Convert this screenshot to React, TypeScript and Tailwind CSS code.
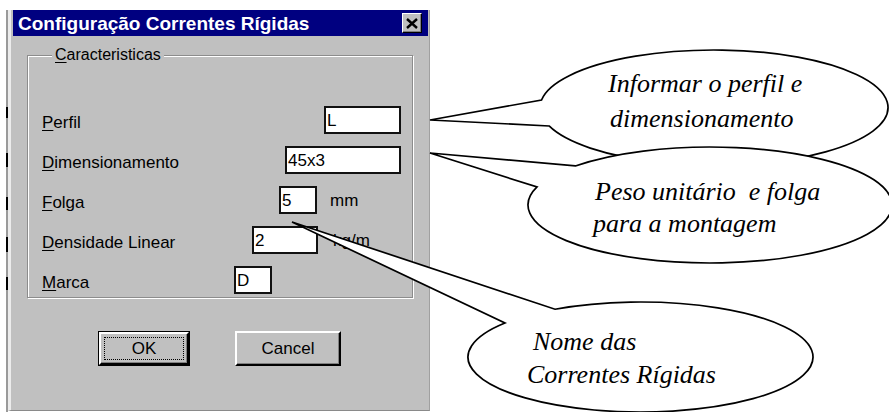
import React from "react";

type Row = {
  first: string;
  rest: string;
  labelW: string;
  inputW: string;
  value: string;
  unit?: string;
  unitCls?: string;
};

const rows: Row[] = [
  { first: "P", rest: "erfil", labelW: "w-[282px]", inputW: "w-[77px]", value: "L" },
  { first: "D", rest: "imensionamento", labelW: "w-[243px]", inputW: "w-[116px]", value: "45x3" },
  { first: "F", rest: "olga", labelW: "w-[237px]", inputW: "w-[38px]", value: "5", unit: "mm", unitCls: "ml-[13px]" },
  { first: "D", rest: "ensidade Linear", labelW: "w-[210px]", inputW: "w-[66px]", value: "2", unit: "kg/m", unitCls: "ml-[15px]" },
  { first: "M", rest: "arca", labelW: "w-[192px]", inputW: "w-[38px]", value: "D" },
];

function calloutPath(
  tip: [number, number],
  cx: number,
  cy: number,
  rx: number,
  ry: number,
  a1: number,
  a2: number
) {
  const r = Math.PI / 180;
  const p1 = [cx + rx * Math.cos(a1 * r), cy + ry * Math.sin(a1 * r)];
  const p2 = [cx + rx * Math.cos(a2 * r), cy + ry * Math.sin(a2 * r)];
  return `M ${tip[0]} ${tip[1]} L ${p1[0].toFixed(2)} ${p1[1].toFixed(2)} A ${rx} ${ry} 0 1 1 ${p2[0].toFixed(2)} ${p2[1].toFixed(2)} L ${tip[0]} ${tip[1]} Z`;
}

function Callouts() {
  return (
    <svg
      className="absolute left-0 top-0 pointer-events-none"
      width={889}
      height={412}
      viewBox="0 0 889 412"
    >
      <path
        d={calloutPath([430, 120], 714, 107.6, 174, 57.6, 187.6, 161.4)}
        fill="#fff"
        stroke="#000"
        strokeWidth={1.7}
        strokeLinejoin="miter"
      />
      <text
        x={608}
        y={92}
        className="italic font-['Liberation_Serif','Times_New_Roman',serif]"
        fontSize={26}
        fill="#000"
      >
        Informar o perfil e
      </text>
      <text
        x={610}
        y={127}
        className="italic font-['Liberation_Serif','Times_New_Roman',serif]"
        fontSize={26}
        fill="#000"
      >
        dimensionamento
      </text>

      <path
        d={calloutPath([430, 153], 710, 205, 182, 58, 222.3, 198.1)}
        fill="#fff"
        stroke="#000"
        strokeWidth={1.7}
      />
      <text
        x={595}
        y={200}
        className="italic whitespace-pre font-['Liberation_Serif','Times_New_Roman',serif]"
        fontSize={26}
        fill="#000"
      >
        {"Peso unitário  e folga"}
      </text>
      <text
        x={593}
        y={232}
        className="italic font-['Liberation_Serif','Times_New_Roman',serif]"
        fontSize={26}
        fill="#000"
      >
        para a montagem
      </text>

      <path
        d={calloutPath([292, 222], 640.5, 357, 172.5, 55, 240.3, 218.2)}
        fill="#fff"
        stroke="#000"
        strokeWidth={1.7}
      />
      <text
        x={533}
        y={350}
        className="italic font-['Liberation_Serif','Times_New_Roman',serif]"
        fontSize={26}
        fill="#000"
      >
        Nome das
      </text>
      <text
        x={527}
        y={383}
        className="italic font-['Liberation_Serif','Times_New_Roman',serif]"
        fontSize={26}
        fill="#000"
      >
        Correntes Rígidas
      </text>
    </svg>
  );
}

function LeftEdge() {
  return (
    <div className="flex flex-col w-[2px] h-[402px] bg-[#9a9a9a]">
      <div className="h-[97px]" />
      <div className="h-[11px] bg-black" />
      <div className="h-[35px]" />
      <div className="h-[14px] bg-black" />
      <div className="h-[30px]" />
      <div className="h-[13px] bg-black" />
      <div className="h-[27px]" />
      <div className="h-[15px] bg-black" />
      <div className="h-[25px]" />
      <div className="h-[13px] bg-black" />
      <div className="flex-1" />
    </div>
  );
}

export default function App() {
  return (
    <div className="relative w-[889px] h-[412px] bg-white overflow-hidden font-['Liberation_Sans',Arial,sans-serif] text-black">
      <div className="flex pl-[6px] pt-[10px]">
        <LeftEdge />
        <div className="flex flex-col w-[422px] h-[401px] bg-[#c0c0c0] border-l-[3px] border-l-[#ececec] border-r border-r-[#a0a0a0] border-b border-b-[#8a8a8a] pl-[2px]">
          {/* Title bar */}
          <div className="flex items-center justify-between w-[415px] h-[26px] bg-[#000080] pl-[5px] pr-[6px]">
            <span className="text-white font-bold text-[19px] leading-none">
              Configuração Correntes Rígidas
            </span>
            <div className="flex items-center justify-center w-[20px] h-[20px] bg-[#c0c0c0] border border-t-white border-l-white border-b-black border-r-black shadow-[inset_-1px_-1px_0_#808080]">
              <svg width="12" height="11" viewBox="0 0 12 11">
                <path d="M1 1 L11 10 M11 1 L1 10" stroke="#000" strokeWidth="2.4" />
              </svg>
            </div>
          </div>

          {/* Group box */}
          <fieldset className="ml-[14px] mt-[10px] w-[386px] border border-[#8c8c8c] shadow-[inset_1px_1px_0_#ffffff,1px_1px_0_#ffffff] pl-[14px] pb-[3px]">
            <legend className="ml-[10px] px-[3px] bg-[#c0c0c0] text-[16px] leading-[18px]">
              <span className="underline underline-offset-2">C</span>aracteristicas
            </legend>
            <div className="flex flex-col gap-[12px] pt-[42px]">
              {rows.map((r, i) => (
                <div key={i} className="flex items-center h-[28px] text-[17px] leading-none">
                  <div className={`${r.labelW} pt-[4px]`}>
                    <span className="underline underline-offset-2">{r.first}</span>
                    {r.rest}
                  </div>
                  <div className={`${r.inputW} h-[28px] bg-white border-2 border-[#111] flex items-center pl-[1px]`}>
                    {r.value}
                  </div>
                  {r.unit ? <div className={`${r.unitCls} pt-[1px]`}>{r.unit}</div> : null}
                </div>
              ))}
            </div>
          </fieldset>

          {/* Buttons */}
          <div className="flex items-start pl-[85px] mt-[33px] gap-[45px]">
            <div className="w-[92px] h-[35px] border border-black">
              <div className="w-full h-full border-2 border-t-white border-l-white border-b-black border-r-black shadow-[inset_-1px_-1px_0_#808080] flex items-center justify-center p-[3px]">
                <div className="w-full h-full border border-dotted border-black flex items-center justify-center text-[17px] leading-none">
                  OK
                </div>
              </div>
            </div>
            <div className="w-[106px] h-[35px] border-2 border-t-white border-l-white border-b-black border-r-black shadow-[inset_-1px_-1px_0_#808080] flex items-center justify-center text-[17px] leading-none">
              Cancel
            </div>
          </div>
        </div>
      </div>
      <Callouts />
    </div>
  );
}
